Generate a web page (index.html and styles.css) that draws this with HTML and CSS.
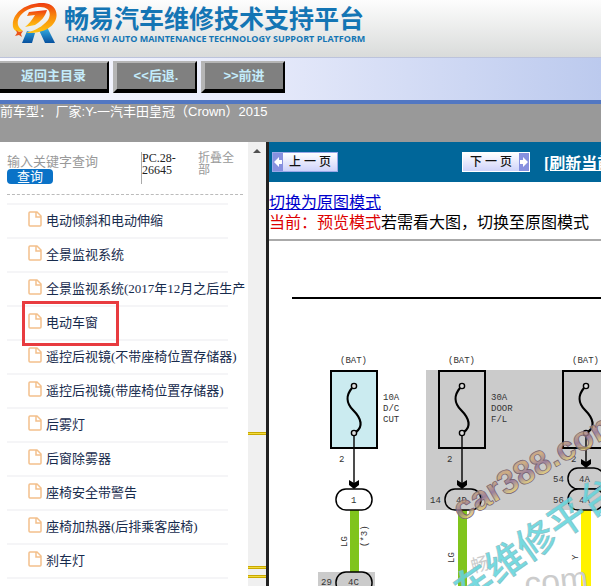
FILE: index.html
```html
<!DOCTYPE html>
<html lang="zh-CN">
<head>
<meta charset="utf-8">
<title>畅易汽车维修技术支持平台</title>
<link rel="stylesheet" href="styles.css">
</head>
<body>
<header class="brand">
  <svg class="brand-logo" viewBox="0 0 48 46" aria-hidden="true">
    <defs>
      <linearGradient id="flame" x1="0" y1="0" x2="0" y2="1">
        <stop offset="0" stop-color="#ee3a10"/><stop offset=".45" stop-color="#f98a0c"/><stop offset="1" stop-color="#ffc411"/>
      </linearGradient>
      <linearGradient id="leg" x1="0" y1="0" x2="0" y2="1">
        <stop offset="0" stop-color="#38b6e8"/><stop offset="1" stop-color="#07509e"/>
      </linearGradient>
    </defs>
    <path fill="url(#leg)" d="M15 31L10 43H20L23 33ZM26 28L33 43H43L35 27Z"/>
    <path fill="url(#flame)" d="M1 27C-1 12 16 2 32 3C47 4 48 20 38 27C33 31 26 33 14 33C24 30 30 27 36 20C40 13 37 7 28 7C15 7 4 16 6 25C7 28 9 29 11 31C6 33 2 31 1 27Z"/>
    <path fill="url(#flame)" d="M17 12L35 10C33 17 29 21 23 25L13 27C17 24 20 20 23 15L15 16Z"/>
    <path fill="#e9541b" d="M4 30L7 32L11 31L9 34L10 37L7 35L3 36L5 33Z"/>
  </svg>
  <div class="brand-text">
    <h1 class="brand-name">畅易汽车维修技术支持平台</h1>
    <p class="brand-sub">CHANG YI AUTO MAINTENANCE TECHNOLOGY SUPPORT PLATFORM</p>
  </div>
</header>
<nav class="toolbar">
  <button class="tool home" type="button">返回主目录</button>
  <button class="tool" type="button">&lt;&lt;后退.</button>
  <button class="tool" type="button">&gt;&gt;前进</button>
</nav>
<div class="model">前车型： 厂家:Y-一汽丰田皇冠（Crown）2015</div>
<div class="workspace">
  <aside class="sidebar">
    <div class="side-body">
      <form class="search">
        <div class="search-field">
          <input class="keyword" type="text" aria-label="关键字" placeholder="输入关键字查询">
          <button class="query" type="button">查询</button>
        </div>
        <div class="code">PC.28-26645</div>
        <a class="fold" href="#">折叠全部</a>
      </form>
      <ul class="topics">
        <li><a href="#"><svg class="doc" viewBox="0 0 14 16"><path d="M1 2Q1 1 2 1H9L13 5V14Q13 15 12 15H2Q1 15 1 14ZM8 1V6H13"/></svg>电动倾斜和电动伸缩</a></li>
        <li><a href="#"><svg class="doc" viewBox="0 0 14 16"><path d="M1 2Q1 1 2 1H9L13 5V14Q13 15 12 15H2Q1 15 1 14ZM8 1V6H13"/></svg>全景监视系统</a></li>
        <li><a href="#"><svg class="doc" viewBox="0 0 14 16"><path d="M1 2Q1 1 2 1H9L13 5V14Q13 15 12 15H2Q1 15 1 14ZM8 1V6H13"/></svg>全景监视系统(2017年12月之后生产</a></li>
        <li class="marked"><a href="#"><svg class="doc" viewBox="0 0 14 16"><path d="M1 2Q1 1 2 1H9L13 5V14Q13 15 12 15H2Q1 15 1 14ZM8 1V6H13"/></svg>电动车窗</a></li>
        <li><a href="#"><svg class="doc" viewBox="0 0 14 16"><path d="M1 2Q1 1 2 1H9L13 5V14Q13 15 12 15H2Q1 15 1 14ZM8 1V6H13"/></svg>遥控后视镜(不带座椅位置存储器)</a></li>
        <li><a href="#"><svg class="doc" viewBox="0 0 14 16"><path d="M1 2Q1 1 2 1H9L13 5V14Q13 15 12 15H2Q1 15 1 14ZM8 1V6H13"/></svg>遥控后视镜(带座椅位置存储器)</a></li>
        <li><a href="#"><svg class="doc" viewBox="0 0 14 16"><path d="M1 2Q1 1 2 1H9L13 5V14Q13 15 12 15H2Q1 15 1 14ZM8 1V6H13"/></svg>后雾灯</a></li>
        <li><a href="#"><svg class="doc" viewBox="0 0 14 16"><path d="M1 2Q1 1 2 1H9L13 5V14Q13 15 12 15H2Q1 15 1 14ZM8 1V6H13"/></svg>后窗除雾器</a></li>
        <li><a href="#"><svg class="doc" viewBox="0 0 14 16"><path d="M1 2Q1 1 2 1H9L13 5V14Q13 15 12 15H2Q1 15 1 14ZM8 1V6H13"/></svg>座椅安全带警告</a></li>
        <li><a href="#"><svg class="doc" viewBox="0 0 14 16"><path d="M1 2Q1 1 2 1H9L13 5V14Q13 15 12 15H2Q1 15 1 14ZM8 1V6H13"/></svg>座椅加热器(后排乘客座椅)</a></li>
        <li><a href="#"><svg class="doc" viewBox="0 0 14 16"><path d="M1 2Q1 1 2 1H9L13 5V14Q13 15 12 15H2Q1 15 1 14ZM8 1V6H13"/></svg>刹车灯</a></li>
      </ul>
    </div>
    <div class="scroll-track" aria-hidden="true">
      <span class="scroll-up"></span>
      <span class="hit first"></span>
      <span class="hit second"></span>
      <span class="hit third"></span>
    </div>
  </aside>
  <main class="viewer">
    <div class="pager">
      <button class="page prev" type="button"><svg class="arrow" viewBox="0 0 10 18"><path d="M1 9L6 4V7H9V11H6V14Z"/></svg><span>上 一 页</span></button>
      <button class="page next" type="button"><span>下 一 页</span><svg class="arrow" viewBox="0 0 10 18"><path d="M9 9L4 4V7H1V11H4V14Z"/></svg></button>
      <a class="refresh" href="#">[刷新当前</a>
    </div>
    <div class="mode">
      <a class="switch" href="#">切换为原图模式</a>
      <p class="hint"><span class="current">当前：预览模式</span>若需看大图，切换至原图模式</p>
    </div>
    <svg class="diagram" width="332" height="345" viewBox="269 241 332 345">
      <defs>
        <linearGradient id="metal" x1="0" y1="0" x2="0" y2="1">
          <stop offset="0" stop-color="#a57a9b"/><stop offset=".3" stop-color="#d0a870"/><stop offset=".55" stop-color="#8f6d92"/><stop offset=".8" stop-color="#e0cb72"/><stop offset="1" stop-color="#b08a70"/>
        </linearGradient>
        <g id="fuse">
          <rect x="-23" y="0" width="46" height="77" stroke="#000" stroke-width="2"/>
          <path d="M-2 17C-8 24 -8 32 -1 39C8 48 9 56 2 61" fill="none" stroke="#000" stroke-width="2.2"/>
          <circle cx="0" cy="15" r="2.6" fill="#ddd" stroke="#000" stroke-width="1.4"/>
          <circle cx="0" cy="62" r="2.6" fill="#ddd" stroke="#000" stroke-width="1.4"/>
        </g>
        <path id="tip" d="M0 0L-5 -4V-9L0 -6L5 -9V-4Z"/>
      </defs>
      <rect x="292" y="297" width="309" height="2"/>
      <rect x="426" y="370" width="175" height="140" fill="#cbcbcb"/>
      <rect x="318" y="572" width="57" height="14" fill="#cbcbcb"/>
      <rect x="350" y="509" width="9" height="63" fill="#80c41c"/>
      <rect x="458" y="509" width="9" height="77" fill="#80c41c"/>
      <rect x="581" y="509" width="10" height="77" fill="#fff200"/>
      <use href="#fuse" x="354" y="371" fill="#cbebf0"/>
      <use href="#fuse" x="462" y="371" fill="#cbcbcb"/>
      <use href="#fuse" x="586" y="371" fill="#cbcbcb"/>
      <path d="M354 436V483M462 436V483M586 436V462" stroke="#000" stroke-width="1.4"/>
      <use href="#tip" x="354" y="489"/>
      <use href="#tip" x="462" y="489"/>
      <use href="#tip" x="586" y="468"/>
      <g class="terminal">
        <rect x="336" y="489" width="36" height="21" rx="10" fill="#fff"/>
        <rect x="336" y="572" width="36" height="21" rx="10"/>
        <rect x="445" y="489" width="36" height="21" rx="10"/>
        <rect x="568" y="468" width="36" height="21" rx="10"/>
        <rect x="568" y="489" width="36" height="21" rx="10"/>
      </g>
      <g class="label">
        <text x="340" y="363">(BAT)</text><text x="448" y="363">(BAT)</text><text x="572" y="363">(BAT)</text>
        <text x="383" y="400">10A</text><text x="383" y="411">D/C</text><text x="383" y="422">CUT</text>
        <text x="491" y="400">30A</text><text x="491" y="411">DOOR</text><text x="491" y="422">F/L</text>
        <text x="339" y="462">2</text><text x="447" y="462">2</text><text x="571" y="462">2</text>
        <text x="351" y="503">1</text><text x="456" y="503">4D</text><text x="430" y="503">14</text>
        <text x="553" y="482">54</text><text x="553" y="503">56</text><text x="579" y="482">4A</text><text x="579" y="503">4A</text>
        <text x="321" y="585">29</text><text x="348" y="585">4C</text>
        <text transform="translate(347 547) rotate(-90)">LG</text>
        <text transform="translate(367 547) rotate(-90)">(*3)</text>
        <text transform="translate(454 563) rotate(-90)">LG</text>
        <text transform="translate(578 560) rotate(-90)">Y</text>
      </g>
      <text class="ghost small" transform="translate(473 573) rotate(-15)">畅</text>
      <text class="ghost" transform="translate(516 597) rotate(-6)">.com</text>
      <text class="stamp-cn" transform="translate(466 606) rotate(-35)">车维修平台</text>
      <text class="stamp" transform="translate(461 522) rotate(-30)">car388.com</text>
    </svg>
  </main>
</div>
</body>
</html>
```

FILE: styles.css
```css
*, *::before, *::after { box-sizing: border-box; }
body {
  margin: 0;
  height: 100vh;
  display: flex;
  flex-direction: column;
  overflow: hidden;
  background: #fff;
  font-family: "Liberation Serif", "Noto Sans CJK SC", serif;
}
button { font: inherit; padding: 0; }
a { color: inherit; }

.brand {
  flex: none;
  display: flex;
  gap: 4px;
  height: 57px;
  padding: 0 12px;
  background: linear-gradient(#fdfdfd, #d9dbda);
  color: #1475b4;
}
.brand-logo { flex: none; width: 48px; height: 46px; }
.brand-text { white-space: nowrap; }
.brand-name {
  margin: 0;
  padding-top: 2px;
  font: bold 25px/30px "Noto Sans CJK SC", sans-serif;
}
.brand-sub {
  margin: 0;
  padding: 0 2px;
  font: bold 9px/14px "Open Sans", sans-serif;
}

.toolbar {
  flex: none;
  display: flex;
  gap: 4px;
  height: 47px;
  padding-top: 3px;
  border-top: 1px solid #bcc3dc;
  border-bottom: 4px solid #5277c2;
  background: linear-gradient(90deg, #fafaff, #e5e9fa 45%, #bccaee);
}
.tool {
  width: 84px;
  height: 32px;
  border: 4px solid;
  border-color: #b5b5b5 #000 #000 #b5b5b5;
  border-top-width: 2px;
  border-right-width: 2px;
  background: #808080;
  color: #c4ecfb;
  font: bold 13px/24px "Liberation Sans", "Noto Sans CJK SC", sans-serif;
}
.tool.home { width: 109px; border-left: 0; }

.model {
  flex: none;
  height: 38px;
  background: #999;
  color: #fff;
  font: 13px/15px "Liberation Sans", "Noto Sans CJK SC", sans-serif;
  white-space: nowrap;
}

.workspace { flex: 1; display: flex; min-height: 0; }
.sidebar {
  flex: none;
  display: flex;
  width: 269px;
  border-right: 3px solid #222;
}
.side-body { flex: 1; min-width: 0; padding-left: 7px; overflow: hidden; }
.search {
  display: flex;
  height: 53px;
  margin-right: 5px;
  padding-top: 10px;
  border-bottom: 1px dashed #bbb;
  font-size: 12px;
  line-height: 12px;
}
.search-field { width: 134px; }
.keyword {
  display: block;
  width: 120px;
  height: 17px;
  padding: 0;
  border: 0;
  background: none;
  font: 13px/17px "Noto Sans CJK SC", sans-serif;
}
.keyword::placeholder { color: #999; opacity: 1; }
.query {
  display: block;
  width: 46px;
  height: 15px;
  border: 0;
  border-radius: 4px;
  background: #0a72c7;
  color: #fff;
  font-size: 13px;
  line-height: 14px;
}
.code { width: 57px; height: 32px; border-left: 1px solid #aaa; color: #222; }
.fold { width: 40px; color: #999; text-decoration: none; }
.topics {
  margin: 8px 20px 0 0;
  padding: 0;
  border-top: 2px solid #f5f5f7;
  list-style: none;
}
.topics li {
  position: relative;
  height: 34px;
  border-bottom: 2px solid #f5f5f7;
}
.topics a {
  display: flex;
  align-items: center;
  gap: 4px;
  height: 32px;
  padding: 0 0 4px 21px;
  color: #172b4d;
  font-size: 13px;
  text-decoration: none;
  white-space: nowrap;
}
.doc { flex: none; width: 14px; height: 16px; fill: none; stroke: #f3c08c; stroke-width: 1.5; }
.marked::after {
  content: "";
  position: absolute;
  left: 15px;
  top: -6px;
  width: 97px;
  height: 45px;
  border: 3px solid #e83b3f;
}
.scroll-track { position: relative; flex: none; width: 18px; background: #f0f0f0; }
.scroll-up {
  display: block;
  width: 8px;
  margin: 7px auto 0 5px;
  border: 4px solid transparent;
  border-top: 0;
  border-bottom-color: #505050;
}
.hit {
  position: absolute;
  left: 0;
  right: 0;
  height: 3px;
  border: solid #c9a800;
  border-width: 1px 0;
  background: #f2dc3c;
}
.hit.first { top: 65.3%; }
.hit.second { top: 95.6%; }
.hit.third { top: 97.6%; }

.viewer { flex: 1; min-width: 0; overflow: hidden; }
.pager {
  display: flex;
  align-items: center;
  height: 40px;
  padding-left: 3px;
  background: #069;
  white-space: nowrap;
}
.page {
  flex: none;
  display: flex;
  align-items: center;
  justify-content: space-between;
  width: 66px;
  height: 20px;
  border: 1px solid #9aa8e8;
  background: linear-gradient(#fff, #cfd3fa);
  color: #111;
  font: 500 12px/18px "Liberation Serif", "Noto Sans CJK SC", serif;
}
.page span { flex: 1; text-align: center; }
.arrow { width: 10px; height: 18px; background: #8790df; fill: #fff; }
.next { width: 68px; margin-left: 124px; border-color: #fff; }
.refresh { margin-left: 14px; color: #fff; font-size: 16px; font-weight: bold; }
.mode {
  height: 59px;
  padding-top: 11px;
  border-bottom: 2px solid #aaa;
  font-size: 16px;
  line-height: 20px;
  white-space: nowrap;
}
.switch { display: block; color: #00c; }
.hint { margin: 0; color: #000; }
.current { color: #d00; }
.diagram { display: block; }
.terminal { fill: #cbcbcb; stroke: #000; stroke-width: 1.5; }
.label { fill: #333; font: 9px "Liberation Mono", monospace; }
.ghost { fill: #ccc; font: 34px "Liberation Sans", "Noto Sans CJK SC", sans-serif; }
.ghost.small { font-size: 18px; }
.stamp-cn { fill: #63d5dc; fill-opacity: .9; stroke: #8fb8bd; stroke-width: .5; font: 500 38px "Noto Sans CJK SC", sans-serif; }
.stamp { fill: url(#metal); stroke: #74606e; stroke-width: .7; fill-opacity: .8; font: bold 34px "Liberation Sans", sans-serif; }
```
